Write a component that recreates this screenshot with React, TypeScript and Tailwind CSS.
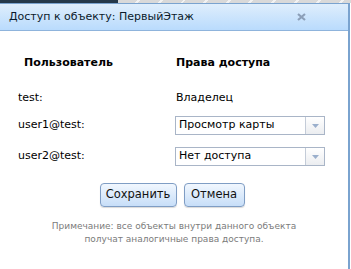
import React from "react";

const font = { fontFamily: '"DejaVu Sans", Verdana, sans-serif' };

function Select({ value }: { value: string }) {
  return (
    <div className="flex h-[19px] w-[150px] border border-[#a9b5c7] bg-white">
      <div className="flex flex-1 items-center pl-[3px] text-[11px] text-black">{value}</div>
      <div className="flex w-[19px] items-center justify-center border-l border-[#c4ccd8] bg-gradient-to-b from-white to-[#ebedf0]">
        <svg width="7" height="4" viewBox="0 0 7 4">
          <path d="M0 0h7L3.5 4z" fill="#9aafcc" />
        </svg>
      </div>
    </div>
  );
}

function Button({ label, w }: { label: string; w: string }) {
  return (
    <button
      type="button"
      className={`${w} h-[24px] rounded-[4px] border border-[#7f9dc4] bg-gradient-to-b from-[#f1f7fe] to-[#c7def8] text-[11.5px] text-[#111] shadow-[0_1px_1px_rgba(0,0,0,0.15)]`}
    >
      {label}
    </button>
  );
}

export default function App() {
  return (
    <div className="relative h-[269px] w-[351px] overflow-hidden bg-white" style={font}>
      {/* page behind the window */}
      <div className="flex h-[3px]">
        <div className="w-[118px] bg-[#26394a]" />
        <div className="flex-1 bg-[repeating-linear-gradient(135deg,#d9d9d9_0px,#d9d9d9_14px,#f2f2f2_14px,#f2f2f2_16px)]" />
      </div>

      <div className="flex h-[266px] w-[350px] flex-col border-r-2 border-t border-[#7aa3cf] bg-white">
        {/* title bar */}
        <div className="flex h-[27px] items-center justify-between border-b border-[#8fb4dc] bg-gradient-to-b from-[#dfeefc] to-[#b9dbfd] pl-[9px] pr-[42px]">
          <span className="text-[11px] text-[#0b1a2a]">Доступ к объекту: ПервыйЭтаж</span>
          <svg width="9" height="8" viewBox="0 0 9 8">
            <path d="M1 1l7 6M8 1l-7 6" stroke="#8c9fb8" strokeWidth="2.2" />
          </svg>
        </div>

        {/* body */}
        <div className="flex flex-col pl-[18px] pt-[25px] text-[11px] text-black">
          <div className="flex h-[14px] items-center font-bold">
            <span className="w-[158px] pl-[6px]">Пользователь</span>
            <span>Права доступа</span>
          </div>
          <div className="mt-[21px] flex h-[14px] items-center">
            <span className="w-[158px]">test:</span>
            <span>Владелец</span>
          </div>
          <div className="mt-[11px] flex items-center">
            <span className="w-[157px]">user1@test:</span>
            <Select value="Просмотр карты" />
          </div>
          <div className="mt-[12px] flex items-center">
            <span className="w-[157px]">user2@test:</span>
            <Select value="Нет доступа" />
          </div>
        </div>

        <div className="mt-[17px] flex justify-center gap-[7px] pr-[4px]">
          <Button label="Сохранить" w="w-[77px]" />
          <Button label="Отмена" w="w-[61px]" />
        </div>

        <p className="mt-[13px] text-center text-[9px] leading-[13px] text-[#7b7b7b]">
          Примечание: все объекты внутри данного объекта
          <br />
          получат аналогичные права доступа.
        </p>
      </div>
    </div>
  );
}
